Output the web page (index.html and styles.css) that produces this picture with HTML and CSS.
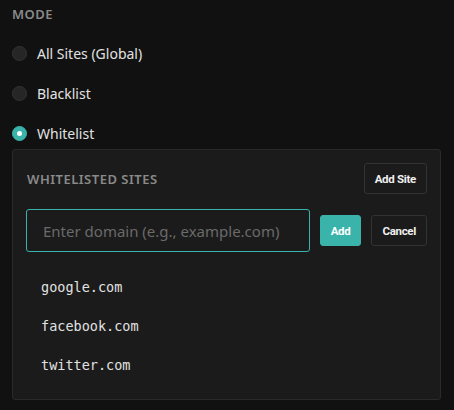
FILE: index.html
```html
<!DOCTYPE html>
<html>
<head>
<meta charset="utf-8">
<link rel="stylesheet" href="styles.css">
</head>
<body>
<div class="section">
  <div class="label">Mode</div>
  <div class="radios">
    <label class="radio"><span class="dot"></span><span>All Sites (Global)</span></label>
    <label class="radio"><span class="dot"></span><span>Blacklist</span></label>
    <label class="radio"><span class="dot on"></span><span>Whitelist</span></label>
  </div>
  <div class="panel">
    <div class="panel-head">
      <div class="title">Whitelisted Sites</div>
      <button class="btn">Add Site</button>
    </div>
    <div class="add-row">
      <input class="input" type="text" placeholder="Enter domain (e.g., example.com)">
      <button class="btn primary">Add</button>
      <button class="btn">Cancel</button>
    </div>
    <ul class="sites">
      <li>google.com</li>
      <li>facebook.com</li>
      <li>twitter.com</li>
    </ul>
  </div>
</div>
</body>
</html>
```
FILE: styles.css
```css
html, body {
  margin: 0;
  padding: 0;
  background: #111111;
  color: #e2e2e2;
  font-family: "Noto Sans", "Open Sans", sans-serif;
}
.section {
  padding: 4px 13px 0 12px;
}
.label {
  font-size: 13px;
  font-weight: 600;
  letter-spacing: 0.5px;
  text-transform: uppercase;
  color: #8a8a8a;
  line-height: 20px;
}
.radios {
  display: flex;
  flex-direction: column;
  gap: 16px;
  margin-top: 17px;
}
.radio {
  display: flex;
  align-items: center;
  gap: 10px;
  height: 24px;
  font-size: 14px;
}
.dot {
  box-sizing: border-box;
  width: 15px;
  height: 15px;
  border-radius: 50%;
  background: #262626;
  border: 1px solid #333333;
  position: relative;
}
.dot.on {
  background: #3ab3ab;
  border-color: #3ab3ab;
}
.dot.on::after {
  content: "";
  position: absolute;
  left: 4px;
  top: 4px;
  width: 5px;
  height: 5px;
  border-radius: 50%;
  background: #ffffff;
}
.panel {
  margin-top: 4px;
  background: #1b1b1b;
  border: 1px solid #2a2a2a;
  border-radius: 3px;
  padding: 13px 13px 14px 13px;
}
.panel-head {
  display: flex;
  justify-content: space-between;
  align-items: center;
}
.title {
  font-size: 13px;
  font-weight: 600;
  letter-spacing: 0.5px;
  text-transform: uppercase;
  color: #8a8a8a;
  padding-left: 1px;
}
.btn {
  box-sizing: border-box;
  height: 31px;
  padding: 0 10px;
  background: #1b1b1b;
  border: 1px solid #333333;
  border-radius: 3px;
  color: #f0f0f0;
  font-family: Roboto, "DejaVu Sans", sans-serif;
  font-weight: 700;
  font-size: 11.5px;
  letter-spacing: -0.3px;
}
.btn.primary {
  background: #3ab3ab;
  border-color: #3ab3ab;
  color: #ffffff;
}
.add-row {
  display: flex;
  align-items: center;
  gap: 10px;
  margin-top: 15px;
}
.input {
  box-sizing: border-box;
  flex: 1;
  min-width: 0;
  height: 43px;
  background: #1b1b1b;
  border: 1px solid #3ab3ab;
  border-radius: 3px;
  padding: 0 16px;
  color: #e2e2e2;
  font-family: "Noto Sans", "Open Sans", sans-serif;
  font-size: 15px;
  outline: none;
}
.input::placeholder {
  color: #6a6a6a;
}
.sites {
  list-style: none;
  margin: 16px 0 0 0;
  padding: 0;
}
.sites li {
  height: 39px;
  line-height: 39px;
  padding-left: 15px;
  font-family: "DejaVu Sans Mono", monospace;
  font-size: 13.5px;
  color: #e2e2e2;
}
```
